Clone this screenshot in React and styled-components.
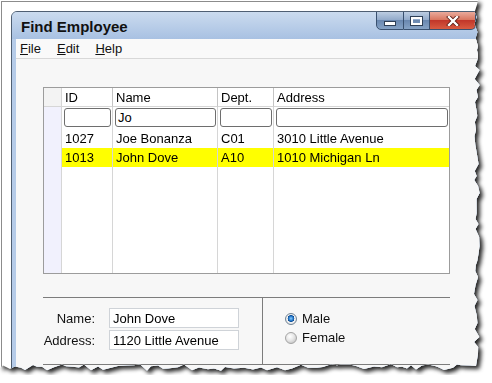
import React from "react";
import styled, { createGlobalStyle } from "styled-components";

const GlobalStyle = createGlobalStyle`
  body {
    margin: 0;
    background: #fff;
    font-family: "Liberation Sans", Arial, sans-serif;
  }
`;

// torn paper outline, fixed pseudo random so the edge is the same each run
const tornEdge = (() => {
  let seed = 7;
  const rnd = () => {
    seed = (seed * 9301 + 49297) % 233280;
    return seed / 233280;
  };
  const pts = ["0px 0px", "478px 0px"];
  for (let y = 5; y < 362; y += 4 + Math.round(rnd() * 5)) {
    pts.push(`${(474 + rnd() * 6).toFixed(1)}px ${y}px`);
  }
  pts.push("476px 366px");
  for (let x = 470; x > 0; x -= 4 + Math.round(rnd() * 6)) {
    pts.push(`${x}px ${(364 + rnd() * 7).toFixed(1)}px`);
  }
  pts.push("0px 368px");
  return `polygon(${pts.join(", ")})`;
})();

const Shadow = styled.div`
  width: 482px;
  height: 375px;
  filter: drop-shadow(3px 3px 2px rgba(0, 0, 0, 0.85));
`;

const Paper = styled.div`
  width: 482px;
  height: 375px;
  background: #fff;
  padding: 1px 0 0 1px;
  box-sizing: border-box;
  overflow: hidden;
  clip-path: ${tornEdge};
`;

const Screen = styled.div`
  border-top: 1px solid #8c8c8c;
  border-left: 1px solid #8c8c8c;
  padding: 9px 0 0 9px;
  height: 100%;
  box-sizing: border-box;
`;

const Window = styled.div`
  width: 500px;
  height: 400px;
  border: 1px solid #4f5f73;
  border-radius: 6px 0 0 0;
  background: #b5cbe8;
  display: flex;
  flex-direction: column;
  overflow: hidden;
`;

const TitleBar = styled.div`
  height: 27px;
  display: flex;
  align-items: flex-start;
  background: linear-gradient(#cbdbef, #a8c1e2);
  flex-shrink: 0;
`;

const Title = styled.div`
  font-size: 15px;
  font-weight: bold;
  color: #111;
  padding: 6px 0 0 9px;
  flex: 1;
`;

const Buttons = styled.div`
  display: flex;
  margin-top: -1px;
  margin-right: 36px;
`;

const CapButton = styled.div`
  width: ${(p) => p.$w}px;
  height: 19px;
  box-sizing: border-box;
  border: 1px solid #39506f;
  border-left-width: ${(p) => (p.$first ? 1 : 0)}px;
  border-radius: ${(p) => p.$radius};
  background: ${(p) =>
    p.$close
      ? "linear-gradient(#e9aa9c, #d97761 45%, #c1372a 50%, #d85b41)"
      : "linear-gradient(#bccde2, #93abcb 45%, #6a88b0 50%, #86a3c6)"};
  display: flex;
  align-items: center;
  justify-content: center;
`;

const MinIcon = styled.div`
  width: 10px;
  height: 3px;
  margin-top: 5px;
  background: #fff;
  border: 1px solid #2e3f56;
`;

const MaxIcon = styled.div`
  width: 7px;
  height: 4px;
  border: 2px solid #fff;
  outline: 1px solid #2e3f56;
`;

const Frame = styled.div`
  flex: 1;
  margin-left: 4px;
  display: flex;
  flex-direction: column;
  background: #f7f7f7;
`;

const MenuBar = styled.div`
  height: 19px;
  display: flex;
  align-items: center;
  padding-left: 4px;
  background: #f9f9f9;
  border-bottom: 1px solid #d8d8d8;
  font-size: 13px;
`;

const MenuItem = styled.span`
  margin-right: 16px;
  color: #111;
`;

const Content = styled.div`
  padding: 28px 0 0 27px;
`;

const Grid = styled.div`
  width: 407px;
  height: 187px;
  box-sizing: border-box;
  border: 1px solid #9c9c9c;
  display: grid;
  grid-template-columns: 18px 51px 105px 56px 1fr;
  grid-template-rows: 19px 21px 20px 19px 1fr;
  background: #fff;
  font-size: 13px;
`;

const Cell = styled.div`
  border-right: 1px solid ${(p) => (p.$head ? "#c4c4c4" : "#d6d6d6")};
  border-bottom: ${(p) => (p.$head ? "1px solid #d6d6d6" : "none")};
  background: ${(p) => p.$bg || "#fff"};
  padding: 0 0 0 3px;
  display: flex;
  align-items: center;
  white-space: nowrap;
  overflow: hidden;
  color: #000;
  &:nth-child(5n) {
    border-right: none;
  }
`;

const RowHead = styled.div`
  border-right: 1px solid #d6d6d6;
  border-bottom: ${(p) => (p.$head ? "1px solid #d6d6d6" : "none")};
  background: ${(p) => (p.$head ? "#f3f3f3" : "#f1f1fd")};
`;

const FilterCell = styled.div`
  border-right: 1px solid #d6d6d6;
  padding: 1px 1px 1px 2px;
  display: flex;
  &:nth-child(5n) {
    border-right: none;
  }
`;

const FilterInput = styled.div`
  flex: 1;
  border: 1px solid #6e6e6e;
  border-radius: 3px;
  background: #fff;
  padding-left: 2px;
  display: flex;
  align-items: center;
  font-size: 13px;
`;

const Panel = styled.div`
  margin-top: 23px;
  width: 407px;
  height: 66px;
  border-top: 1px solid #7c7c7c;
  border-bottom: 1px solid #7c7c7c;
  display: grid;
  grid-template-columns: 220px 1fr;
`;

const FormSide = styled.div`
  border-right: 1px solid #7c7c7c;
  display: grid;
  grid-template-columns: 52px 130px;
  column-gap: 14px;
  row-gap: 2px;
  align-content: start;
  padding-top: 10px;
  font-size: 13px;
`;

const Label = styled.div`
  text-align: right;
  align-self: center;
  color: #111;
`;

const Field = styled.div`
  height: 20px;
  box-sizing: border-box;
  border: 1px solid #cfd3d8;
  background: #fff;
  padding-left: 3px;
  display: flex;
  align-items: center;
`;

const RadioSide = styled.div`
  padding: 13px 0 0 22px;
  display: flex;
  flex-direction: column;
  gap: 4px;
  font-size: 13px;
`;

const RadioRow = styled.div`
  display: flex;
  align-items: center;
  gap: 5px;
  color: #111;
`;

const RadioDot = styled.span`
  width: 12px;
  height: 12px;
  box-sizing: border-box;
  border-radius: 50%;
  border: 1px solid ${(p) => (p.$on ? "#6f8294" : "#a3a3a3")};
  background: ${(p) =>
    p.$on
      ? "radial-gradient(circle at 50% 45%, #8fd0ff 0, #2a7fd0 2px, #0d4d96 3.2px, #f4f4f4 3.6px, #e0e0e0 6px)"
      : "radial-gradient(circle at 40% 35%, #ffffff 0, #e6e6e6 4px, #c9c9c9 7px)"};
`;

const rows = [
  { id: "1027", name: "Joe Bonanza", dept: "C01", addr: "3010 Little Avenue" },
  { id: "1013", name: "John Dove", dept: "A10", addr: "1010 Michigan Ln", sel: true },
];

export default function App() {
  return (
    <>
      <GlobalStyle />
      <Shadow>
        <Paper>
          <Screen>
            <Window>
              <TitleBar>
                <Title>Find Employee</Title>
                <Buttons>
                  <CapButton $w={28} $first $radius="0 0 0 5px">
                    <MinIcon />
                  </CapButton>
                  <CapButton $w={26} $radius="0">
                    <MaxIcon />
                  </CapButton>
                  <CapButton $w={46} $close $radius="0 0 5px 0">
                    <svg width="14" height="10" viewBox="0 0 14 10">
                      <path d="M3 1 L11 9 M11 1 L3 9" stroke="#5a1a12" strokeWidth="4" strokeLinecap="square" />
                      <path d="M3 1 L11 9 M11 1 L3 9" stroke="#fff" strokeWidth="2.4" strokeLinecap="square" />
                    </svg>
                  </CapButton>
                </Buttons>
              </TitleBar>
              <Frame>
                <MenuBar>
                  <MenuItem><u>F</u>ile</MenuItem>
                  <MenuItem><u>E</u>dit</MenuItem>
                  <MenuItem><u>H</u>elp</MenuItem>
                </MenuBar>
                <Content>
                  <Grid>
                    <RowHead $head />
                    <Cell $head>ID</Cell>
                    <Cell $head>Name</Cell>
                    <Cell $head>Dept.</Cell>
                    <Cell $head>Address</Cell>

                    <RowHead />
                    <FilterCell><FilterInput /></FilterCell>
                    <FilterCell><FilterInput>Jo</FilterInput></FilterCell>
                    <FilterCell><FilterInput /></FilterCell>
                    <FilterCell><FilterInput /></FilterCell>

                    {rows.map((r) => (
                      <React.Fragment key={r.id}>
                        <RowHead />
                        <Cell $bg={r.sel && "#ffff00"}>{r.id}</Cell>
                        <Cell $bg={r.sel && "#ffff00"}>{r.name}</Cell>
                        <Cell $bg={r.sel && "#ffff00"}>{r.dept}</Cell>
                        <Cell $bg={r.sel && "#ffff00"}>{r.addr}</Cell>
                      </React.Fragment>
                    ))}

                    <RowHead />
                    <Cell />
                    <Cell />
                    <Cell />
                    <Cell />
                  </Grid>
                  <Panel>
                    <FormSide>
                      <Label>Name:</Label>
                      <Field>John Dove</Field>
                      <Label>Address:</Label>
                      <Field>1120 Little Avenue</Field>
                    </FormSide>
                    <RadioSide>
                      <RadioRow><RadioDot $on />Male</RadioRow>
                      <RadioRow><RadioDot />Female</RadioRow>
                    </RadioSide>
                  </Panel>
                </Content>
              </Frame>
            </Window>
          </Screen>
        </Paper>
      </Shadow>
    </>
  );
}
